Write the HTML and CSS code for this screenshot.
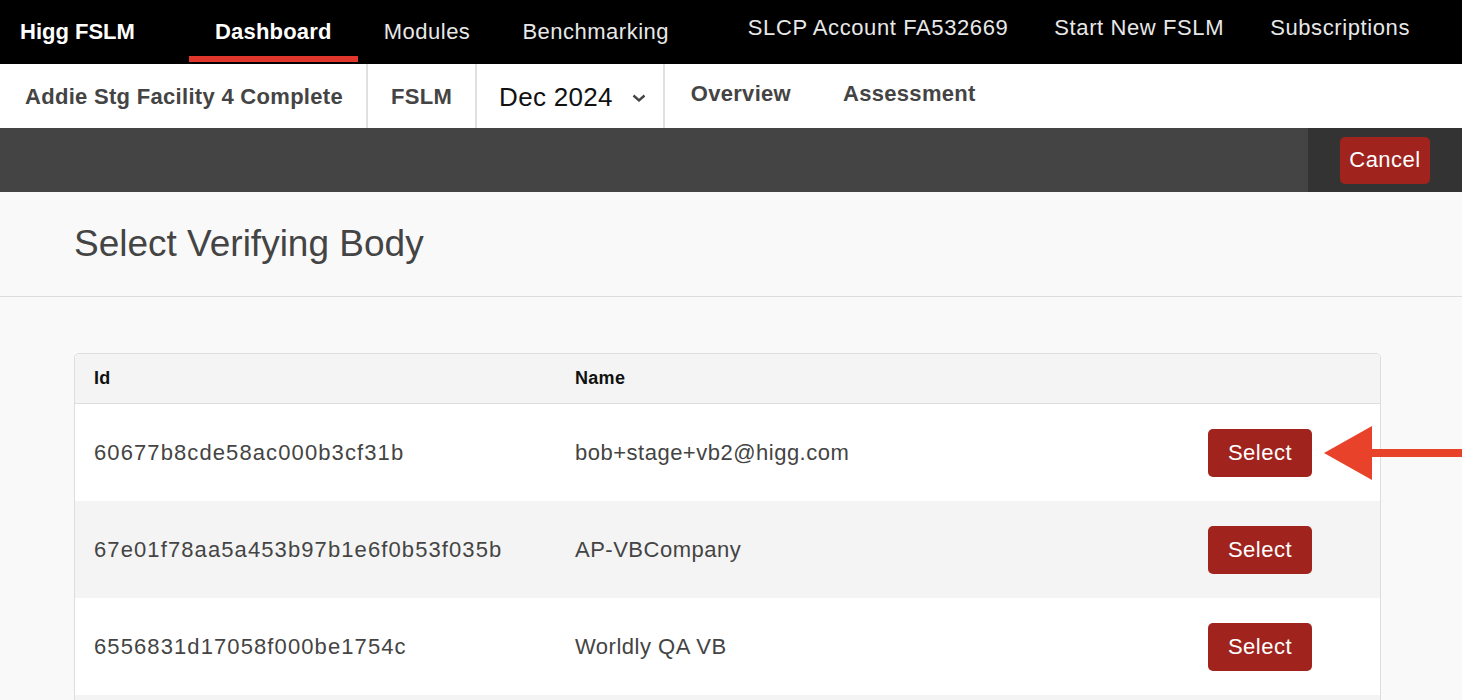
FILE: index.html
```html
<!DOCTYPE html>
<html lang="en">
<head>
    <meta charset="UTF-8">
    <title>Select Verifying Body</title>
    <link rel="stylesheet" href="styles.css">
</head>
<body>
    <header class="topnav">
        <div class="brand">Higg FSLM</div>
        <nav class="main-links">
            <a class="active">Dashboard</a>
            <a>Modules</a>
            <a>Benchmarking</a>
        </nav>
        <nav class="account-links">
            <a>SLCP Account FA532669</a>
            <a>Start New FSLM</a>
            <a>Subscriptions</a>
        </nav>
    </header>

    <div class="subnav">
        <div class="sub-item facility">Addie Stg Facility 4 Complete</div>
        <div class="sub-item">FSLM</div>
        <div class="sub-item period">
            Dec 2024
            <svg class="chevron" width="16" height="10" viewBox="0 0 16 10">
                <path d="M2.5 2.5 L8 7.5 L13.5 2.5" fill="none" stroke="#444" stroke-width="2.4"/>
            </svg>
        </div>
        <div class="sub-tabs">
            <a>Overview</a>
            <a>Assessment</a>
        </div>
    </div>

    <div class="actionbar">
        <div class="actions">
            <button class="btn">Cancel</button>
        </div>
    </div>

    <div class="page-title">
        <h1>Select Verifying Body</h1>
    </div>

    <main class="content">
        <div class="table">
            <div class="row head">
                <div>Id</div>
                <div>Name</div>
                <div></div>
            </div>
            <div class="row">
                <div class="id">60677b8cde58ac000b3cf31b</div>
                <div>bob+stage+vb2@higg.com</div>
                <div class="cell-btn">
                    <button class="btn">Select</button>
                    <svg class="pointer" width="140" height="56" viewBox="0 0 140 56">
                        <polygon points="0,28 48,1 48,55" fill="#e8432a"/>
                        <rect x="46" y="24" width="94" height="8" fill="#e8432a"/>
                    </svg>
                </div>
            </div>
            <div class="row">
                <div class="id">67e01f78aa5a453b97b1e6f0b53f035b</div>
                <div>AP-VBCompany</div>
                <div class="cell-btn"><button class="btn">Select</button></div>
            </div>
            <div class="row">
                <div class="id">6556831d17058f000be1754c</div>
                <div>Worldly QA VB</div>
                <div class="cell-btn"><button class="btn">Select</button></div>
            </div>
            <div class="row"></div>
        </div>
    </main>
</body>
</html>
```

FILE: styles.css
```css
body {
    margin: 0;
    font-family: "Liberation Sans", Arial, sans-serif;
    background: #f9f9f9;
    color: #444;
}

a {
    cursor: pointer;
}

/* top black bar */
.topnav {
    display: flex;
    align-items: flex-start;
    height: 64px;
    background: #000;
    color: #fff;
}

.brand {
    font-weight: bold;
    font-size: 22px;
    padding: 20px 0 0 20px;
    width: 189px;
    box-sizing: border-box;
    line-height: 24px;
}

.main-links {
    display: flex;
}

.main-links a {
    display: block;
    padding: 20px 26px 0;
    height: 36px;
    line-height: 24px;
    font-size: 22px;
    letter-spacing: 0.5px;
    color: #e8e8e8;
    border-bottom: 6px solid transparent;
}

.main-links a.active {
    color: #fff;
    font-weight: bold;
    letter-spacing: 0.2px;
    border-bottom-color: #e0362b;
}

.account-links {
    display: flex;
    margin-left: auto;
    padding: 16px 29px 0 0;
}

.account-links a {
    padding: 0 23px;
    font-size: 22px;
    letter-spacing: 0.6px;
    line-height: 24px;
    color: #e8e8e8;
}

/* facility sub nav */
.subnav {
    display: flex;
    align-items: stretch;
    height: 64px;
    background: #fff;
}

.sub-item {
    display: flex;
    align-items: center;
    padding: 2px 23px 0;
    border-right: 2px solid #e0e0e0;
    font-size: 22px;
    letter-spacing: 0.3px;
    font-weight: bold;
    color: #444;
}

.sub-item.facility {
    padding-left: 25px;
}

.sub-item.period {
    font-weight: normal;
    font-size: 26px;
    color: #111;
    padding-left: 22px;
    padding-right: 16px;
}

.chevron {
    margin-left: 18px;
    margin-top: 2px;
}

.sub-tabs {
    display: flex;
    align-items: center;
    gap: 52px;
    padding: 0 26px;
}

.sub-tabs a {
    font-size: 22px;
    letter-spacing: 0.3px;
    font-weight: bold;
    color: #444;
    margin-top: -4px;
}

/* dark action bar */
.actionbar {
    display: flex;
    justify-content: flex-end;
    height: 64px;
    background: #444;
}

.actions {
    display: flex;
    align-items: center;
    background: #333;
    padding: 0 32px;
}

.btn {
    font-family: "Liberation Sans", Arial, sans-serif;
    background: #a0231d;
    color: #fff;
    border: none;
    border-radius: 5px;
    font-size: 22px;
    letter-spacing: 0.5px;
    height: 47px;
    padding: 0;
    cursor: pointer;
}

.actions .btn {
    width: 90px;
}

/* title */
.page-title {
    height: 104px;
    border-bottom: 1px solid #ddd;
    display: flex;
    align-items: center;
    padding-left: 74px;
}

.page-title h1 {
    margin: 0;
    font-size: 37px;
    font-weight: normal;
    color: #444;
}

/* table */
.content {
    padding: 56px 81px 0 74px;
}

.table {
    border: 1px solid #ddd;
    border-radius: 5px;
    background: #fff;
}

.row {
    display: grid;
    grid-template-columns: 500px 1fr 172px;
    align-items: center;
    height: 97px;
    font-size: 22px;
    letter-spacing: 0.5px;
    color: #444;
}

.row > div:first-child {
    padding-left: 19px;
}

.row .id {
    letter-spacing: 1.1px;
}

.row:nth-child(odd) {
    background: #f4f4f4;
}

.row.head {
    height: 49px;
    border-bottom: 1px solid #ddd;
    border-radius: 5px 5px 0 0;
    font-size: 18px;
    letter-spacing: 0.3px;
    font-weight: bold;
    color: #111;
}

.cell-btn {
    position: relative;
}

.cell-btn .btn {
    width: 104px;
    height: 48px;
}

.pointer {
    position: absolute;
    left: 116px;
    top: -4px;
}
```
